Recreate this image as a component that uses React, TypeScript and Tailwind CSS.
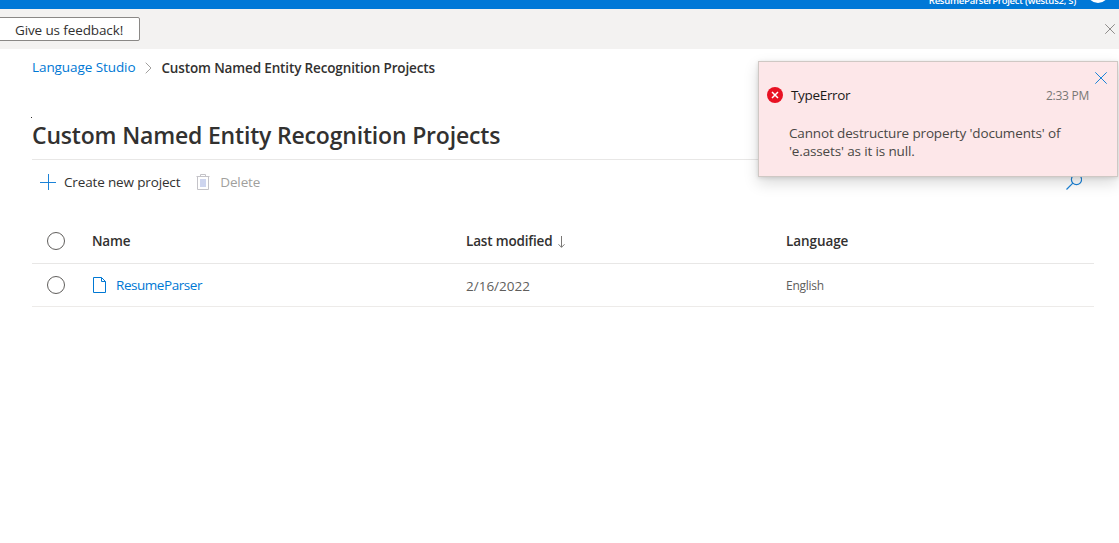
type IconProps = {
  className?: string;
};

type Project = {
  name: string;
  lastModified: string;
  language: string;
};

const projects: Project[] = [
  { name: "ResumeParser", lastModified: "2/16/2022", language: "English" },
];

function CloseIcon({ className }: IconProps) {
  return (
    <svg viewBox="0 0 12 12" fill="none" stroke="currentColor" className={className}>
      <path d="M0.3 0.3 11.7 11.7M11.7 0.3 0.3 11.7" />
    </svg>
  );
}

function ChevronIcon({ className }: IconProps) {
  return (
    <svg viewBox="0 0 7 12" fill="none" stroke="currentColor" className={className}>
      <path d="M0.7 0.7 6 6 0.7 11.3" />
    </svg>
  );
}

function AddIcon({ className }: IconProps) {
  return (
    <svg viewBox="0 0 16 16" fill="none" stroke="currentColor" className={className}>
      <path d="M8.5 0V16M0 8.5H16" />
    </svg>
  );
}

function TrashIcon({ className }: IconProps) {
  return (
    <svg viewBox="0 0 14 16" fill="none" className={className}>
      <path d="M4 5h6v8H4z" fill="#dfe6f8" />
      <path
        d="M0.5 2.5h13M4.5 2.5v-2h5v2M1.5 2.5v13h11v-13"
        stroke="#c4c3c8"
      />
      <path d="M5 5v8M7 5v8M9 5v8" stroke="#bcc4e6" />
    </svg>
  );
}

function SearchIcon({ className }: IconProps) {
  return (
    <svg viewBox="0 0 16 16" fill="none" stroke="currentColor" className={className}>
      <circle cx="10.5" cy="5.5" r="5.1" strokeWidth="1.2" />
      <path d="M6.8 9.2 0.5 15.5" strokeWidth="1.2" />
    </svg>
  );
}

function FileIcon({ className }: IconProps) {
  return (
    <svg viewBox="0 0 13 16" fill="none" stroke="currentColor" className={className}>
      <path d="M0.5 0.5H8.5L12.5 4.5V15.5H0.5ZM8.5 0.5V4.5H12.5" />
    </svg>
  );
}

function SortDownIcon({ className }: IconProps) {
  return (
    <svg viewBox="0 0 7 12" fill="none" stroke="currentColor" className={className}>
      <path d="M3.5 0V11.3M0.5 8.3 3.5 11.3 6.5 8.3" />
    </svg>
  );
}

function ErrorIcon({ className }: IconProps) {
  return (
    <svg viewBox="0 0 16 16" fill="none" className={className}>
      <circle cx="8" cy="8" r="8" fill="#e81123" />
      <path d="M5 5 11 11M11 5 5 11" stroke="#fff" strokeWidth="1.5" />
    </svg>
  );
}

function RowSelector({ label }: { label: string }) {
  return (
    <span
      role="checkbox"
      aria-checked="false"
      aria-label={label}
      className="ml-[15px] block size-[18px] rounded-full border border-[#605e5c]"
    />
  );
}

function TopBar() {
  return (
    <header className="flex h-[9px] items-end justify-end overflow-hidden bg-[#0078d7] pr-2.5 text-white">
      <span className="mr-[11px] mb-px text-[9.5px] leading-[14px] font-semibold tracking-[-0.25px] whitespace-nowrap">
        ResumeParserProject (westus2, S)
      </span>
      <span className="mb-[6px] size-[22px] shrink-0 rounded-full bg-white" />
    </header>
  );
}

function FeedbackBar() {
  return (
    <div className="flex h-10 items-center justify-between bg-[#f3f2f1] pr-1">
      <button
        type="button"
        className="-ml-1 h-6 w-36 rounded-xs border border-[#8a8886] bg-white pt-0.5 pl-[18px] text-left text-[13.5px] leading-5 tracking-[-0.12px] whitespace-nowrap text-[#323130]"
      >
        Give us feedback!
      </button>
      <button type="button" aria-label="Dismiss">
        <CloseIcon className="size-2.5 text-[#797775]" />
      </button>
    </div>
  );
}

function ErrorToast() {
  return (
    <div
      role="alert"
      className="absolute top-[61px] left-[758px] h-[116px] w-[360px] border border-[#cfc8c4] bg-[#fde7e9] pt-2.5 shadow-[0_6px_14px_rgba(0,0,0,0.15),0_1px_4px_rgba(0,0,0,0.12)]"
    >
      <div className="flex justify-end pr-2.5">
        <button type="button" aria-label="Close">
          <CloseIcon className="size-3 text-[#1b83d8]" />
        </button>
      </div>
      <div className="mt-px flex h-5 items-center pr-7 pl-2">
        <ErrorIcon className="size-4" />
        <span className="ml-2 text-[13.5px] tracking-[-0.33px] text-[#1b1a19]">TypeError</span>
        <span className="ml-auto pt-px text-[12px] tracking-[-0.25px] text-[#797775]">
          2:33 PM
        </span>
      </div>
      <p className="mt-[19px] pl-[30px] text-[13.5px] leading-[18px] tracking-[-0.14px] text-[#494745]">
        Cannot destructure property 'documents' of
        <br />
        'e.assets' as it is null.
      </p>
    </div>
  );
}

export default function App() {
  return (
    <div className="relative h-[543px] w-[1119px] overflow-hidden bg-white font-['Open_Sans','Noto_Sans',sans-serif] text-[#323130]">
      <TopBar />
      <FeedbackBar />

      <main className="pr-[25px] pl-8">
        <nav className="flex h-[38px] items-center text-[13.5px]">
          <a className="pb-0.5 tracking-[-0.08px] text-[#0078d4]">Language Studio</a>
          <ChevronIcon className="mr-[9px] ml-2.5 h-3 w-[7px] text-[#a19f9d]" />
          <span className="pt-px font-semibold tracking-[-0.14px]">
            Custom Named Entity Recognition Projects
          </span>
        </nav>

        <div className="flex h-[73px] flex-col border-b border-[#e8e7e6]">
          <span className="mt-[30px] -ml-px size-px bg-[#323130]" />
          <h1 className="mt-px text-[23px] leading-8 font-semibold tracking-[-0.18px]">
            Custom Named Entity Recognition Projects
          </h1>
        </div>

        <div className="flex h-11 items-center pr-3 pl-2 text-[13.5px]">
          <button type="button" className="flex items-center gap-2">
            <AddIcon className="size-4 text-[#1b83d8]" />
            <span className="tracking-[-0.15px]">Create new project</span>
          </button>
          <button type="button" disabled className="ml-4 flex items-center gap-2.5">
            <TrashIcon className="h-4 w-3.5" />
            <span className="tracking-[-0.15px] text-[#a19f9d]">Delete</span>
          </button>
          <button type="button" aria-label="Search" className="ml-auto">
            <SearchIcon className="size-4 text-[#1b83d8]" />
          </button>
        </div>

        <div className="mt-[15px]">
          <div className="grid h-[45px] grid-cols-[60px_374px_320px_1fr] items-center border-b border-[#e8e7e6] text-[13.5px] font-semibold">
            <RowSelector label="Select all projects" />
            <span className="tracking-[-0.2px]">Name</span>
            <span className="flex items-center gap-1.5 tracking-[-0.18px]">
              Last modified
              <SortDownIcon className="mt-0.5 h-3 w-[7px] text-[#797775]" />
            </span>
            <span className="tracking-[-0.08px]">Language</span>
          </div>
          {projects.map((project) => (
            <div
              key={project.name}
              className="grid h-[43px] grid-cols-[60px_374px_320px_1fr] items-center border-b border-[#edebe9] text-[13.5px] text-[#605e5c]"
            >
              <RowSelector label={`Select ${project.name}`} />
              <a className="flex items-center gap-2.5 tracking-[-0.45px] text-[#0078d4]">
                <FileIcon className="ml-px h-4 w-[13px]" />
                {project.name}
              </a>
              <span className="pt-0.5">{project.lastModified}</span>
              <span className="pt-0.5 text-[12px] tracking-[-0.25px]">{project.language}</span>
            </div>
          ))}
        </div>
      </main>

      <ErrorToast />
    </div>
  );
}
